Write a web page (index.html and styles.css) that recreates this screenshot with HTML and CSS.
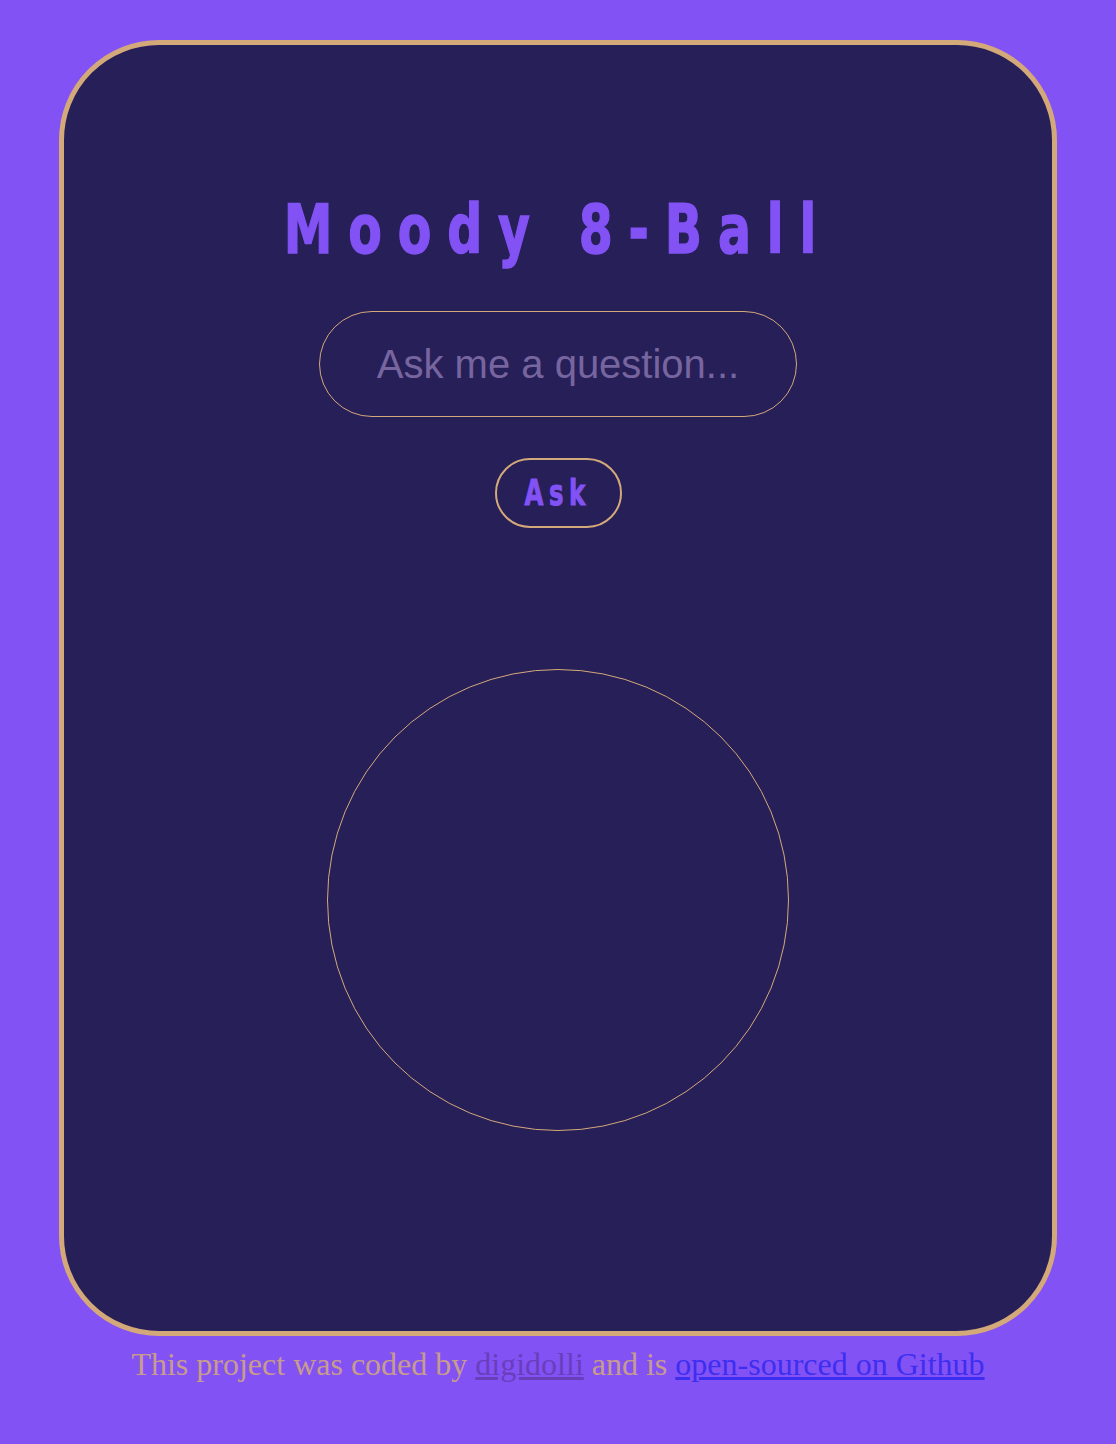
FILE: index.html
```html
<!DOCTYPE html>
<html lang="en">
<head>
<meta charset="utf-8">
<title>Moody 8-Ball</title>
<link rel="stylesheet" href="styles.css">
</head>
<body>
<main class="card">
  <h1 class="title"><span class="squeeze">Moody 8-Ball</span></h1>
  <form class="ask-form">
    <input class="question" type="text" placeholder="Ask me a question...">
    <button class="ask-btn" type="button"><span class="squeeze">Ask</span></button>
  </form>
  <div class="ball"></div>
</main>
<footer class="footer">
  This project was coded by <a class="link-visited" href="#">digidolli</a> and is <a class="link" href="#">open-sourced on Github</a>
</footer>
</body>
</html>
```

FILE: styles.css
```css
html, body {
  margin: 0;
  padding: 0;
}
body {
  background: #8352f5;
  padding-top: 40px;
  font-family: "Liberation Serif", "Times New Roman", serif;
}
.card {
  box-sizing: border-box;
  width: 998px;
  height: 1296px;
  margin: 0 auto;
  background: #271f58;
  border: 5px solid #d4a97a;
  border-radius: 100px;
  display: flex;
  flex-direction: column;
  align-items: center;
  padding-top: 145px;
}
.squeeze {
  display: inline-block;
  transform: scaleX(0.72);
}
.title {
  margin: 0;
  font-family: "DejaVu Sans", sans-serif;
  font-weight: 700;
  font-size: 68px;
  line-height: 80px;
  letter-spacing: 22px;
  color: #8352f5;
  -webkit-text-stroke: 1.5px #8352f5;
  white-space: nowrap;
}
.ask-form {
  display: flex;
  flex-direction: column;
  align-items: center;
  margin-top: 41px;
}
.question {
  box-sizing: border-box;
  width: 478px;
  height: 106px;
  border: 1px solid #d4a97a;
  border-radius: 53px;
  background: transparent;
  font-family: "Liberation Sans", Arial, sans-serif;
  font-size: 40px;
  text-align: center;
  color: #d4a97a;
  outline: none;
  padding: 0;
}
.question::placeholder {
  color: #76659f;
}
.ask-btn {
  box-sizing: border-box;
  margin-top: 41px;
  width: 127px;
  height: 70px;
  border: 2px solid #d4a97a;
  border-radius: 35px;
  background: transparent;
  color: #8352f5;
  font-family: "DejaVu Sans", sans-serif;
  font-weight: 700;
  font-size: 36px;
  line-height: 40px;
  letter-spacing: 8px;
  -webkit-text-stroke: 1px #8352f5;
  padding: 0;
}
.ask-btn .squeeze {
  transform: scaleX(0.68);
}
.ball {
  box-sizing: border-box;
  margin-top: 141px;
  width: 462px;
  height: 462px;
  border: 1px solid #d4a97a;
  border-radius: 50%;
}
.footer {
  text-align: center;
  font-size: 32px;
  line-height: 56px;
  color: #c89c8c;
}
.link-visited {
  color: #6a3ebb;
}
.link {
  color: #3d2ef0;
}
```
